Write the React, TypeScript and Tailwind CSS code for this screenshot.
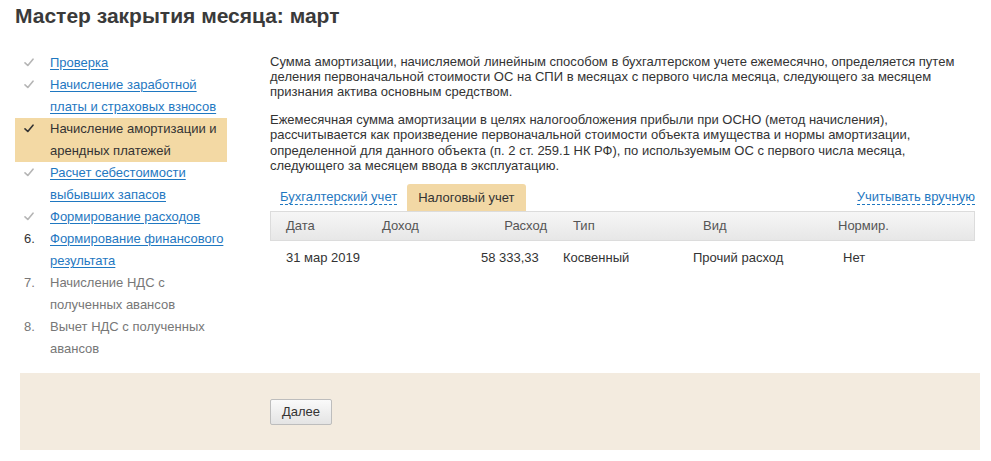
import type { ReactNode } from 'react';

type Step = {
  marker: 'done' | 'current' | string;
  lines: string[];
  link?: boolean;
  active?: boolean;
};

const STEPS: Step[] = [
  { marker: 'done', lines: ['Проверка'], link: true },
  { marker: 'done', lines: ['Начисление заработной', 'платы и страховых взносов'], link: true },
  { marker: 'current', lines: ['Начисление амортизации и', 'арендных платежей'], active: true },
  { marker: 'done', lines: ['Расчет себестоимости', 'выбывших запасов'], link: true },
  { marker: 'done', lines: ['Формирование расходов'], link: true },
  { marker: '6.', lines: ['Формирование финансового', 'результата'], link: true },
  { marker: '7.', lines: ['Начисление НДС с', 'полученных авансов'] },
  { marker: '8.', lines: ['Вычет НДС с полученных', 'авансов'] },
];

function Check({ dark }: { dark?: boolean }) {
  return (
    <svg width="10" height="9" viewBox="0 0 10 9" fill="none" className="mt-[6px]">
      <path
        d="M1 4.8L3.8 7.5L9 1.2"
        stroke={dark ? '#333333' : '#b5b5b5'}
        strokeWidth="1.6"
        strokeLinecap="round"
        strokeLinejoin="round"
      />
    </svg>
  );
}

function StepItem({ step }: { step: Step }) {
  let marker: ReactNode;
  if (step.marker === 'done') marker = <Check />;
  else if (step.marker === 'current') marker = <Check dark />;
  else marker = <span className={step.link ? 'text-[#333]' : 'text-[#777]'}>{step.marker}</span>;

  return (
    <li className={`flex pl-[9px] ${step.active ? 'bg-[#f3d9a4]' : ''}`}>
      <div className="w-[26px] shrink-0">{marker}</div>
      <div className="whitespace-nowrap">
        {step.lines.map((line) => (
          <div key={line}>
            {step.link ? (
              <a href="#" className="text-[#1f78c1] underline underline-offset-2">
                {line}
              </a>
            ) : (
              <span className={step.active ? 'text-[#333]' : 'text-[#777]'}>{line}</span>
            )}
          </div>
        ))}
      </div>
    </li>
  );
}

export default function App() {
  return (
    <div className="w-[991px] h-[461px] bg-white text-[#333] font-['Liberation_Sans',Arial,sans-serif] overflow-hidden">
      {/* Title */}
      <h1 className="pl-[15px] pt-[3px] text-[21px] leading-[26px] font-bold text-[#3a3a3a]">
        Мастер закрытия месяца: март
      </h1>

      <div className="flex mt-[23px]">
        {/* Steps */}
        <ul className="ml-[15px] w-[212px] shrink-0 text-[13px] leading-[22px]">
          {STEPS.map((s) => (
            <StepItem key={s.lines[0]} step={s} />
          ))}
        </ul>

        {/* Content */}
        <div className="ml-[43px] w-[705px] pt-[2px]">
          <p className="text-[13px] leading-[15px]">
            Сумма амортизации, начисляемой линейным способом в бухгалтерском учете ежемесячно, определяется путем
            деления первоначальной стоимости ОС на СПИ в месяцах с первого числа месяца, следующего за месяцем
            признания актива основным средством.
          </p>
          <p className="text-[13px] leading-[15.3px] mt-[13px]">
            Ежемесячная сумма амортизации в целях налогообложения прибыли при ОСНО (метод начисления),
            рассчитывается как произведение первоначальной стоимости объекта имущества и нормы амортизации,
            определенной для данного объекта (п. 2 ст. 259.1 НК РФ), по используемым ОС с первого числа месяца,
            следующего за месяцем ввода в эксплуатацию.
          </p>

          {/* Tabs */}
          <div className="flex items-end mt-[11px] h-[27px] text-[13px]">
            <a
              href="#"
              className="ml-[10px] mb-[6px] text-[#1f78c1] border-b border-dashed border-[#1f78c1] leading-[15px]"
            >
              Бухгалтерский учет
            </a>
            <div className="ml-[10px] h-[27px] px-[11px] bg-[#f2d8a5] rounded-t-[3px] flex items-center">
              Налоговый учет
            </div>
            <a
              href="#"
              className="ml-auto mb-[6px] text-[#1f78c1] border-b border-dashed border-[#1f78c1] leading-[15px]"
            >
              Учитывать вручную
            </a>
          </div>

          {/* Table */}
          <div className="text-[13px] whitespace-nowrap">
            <div className="flex items-center h-[30px] border border-[#dcdcdc] bg-gradient-to-b from-[#f6f6f6] to-[#e7e7e7] text-[#555]">
              <div className="w-[111px] pl-[15px]">Дата</div>
              <div className="w-[100px]">Доход</div>
              <div className="w-[65px] text-right">Расход</div>
              <div className="w-[156px] pl-[26px]">Тип</div>
              <div className="w-[135px]">Вид</div>
              <div className="flex-1">Нормир.</div>
            </div>
            <div className="flex items-center h-[34px]">
              <div className="w-[111px] pl-[16px]">31 мар 2019</div>
              <div className="w-[100px]" />
              <div className="w-[57px] text-right">58 333,33</div>
              <div className="w-[155px] pl-[25px]">Косвенный</div>
              <div className="w-[150px]">Прочий расход</div>
              <div className="flex-1">Нет</div>
            </div>
          </div>
        </div>
      </div>

      {/* Footer */}
      <div className="mx-[20px] w-[960px] mt-[13px] h-[77px] bg-[#f3ebdf] flex items-center pl-[250px]">
        <button
          type="button"
          className="h-[26px] w-[62px] rounded-[2px] border border-[#bdbdbd] bg-gradient-to-b from-[#fafafa] to-[#e4e4e4] text-[13px] text-[#333]"
        >
          Далее
        </button>
      </div>
    </div>
  );
}
